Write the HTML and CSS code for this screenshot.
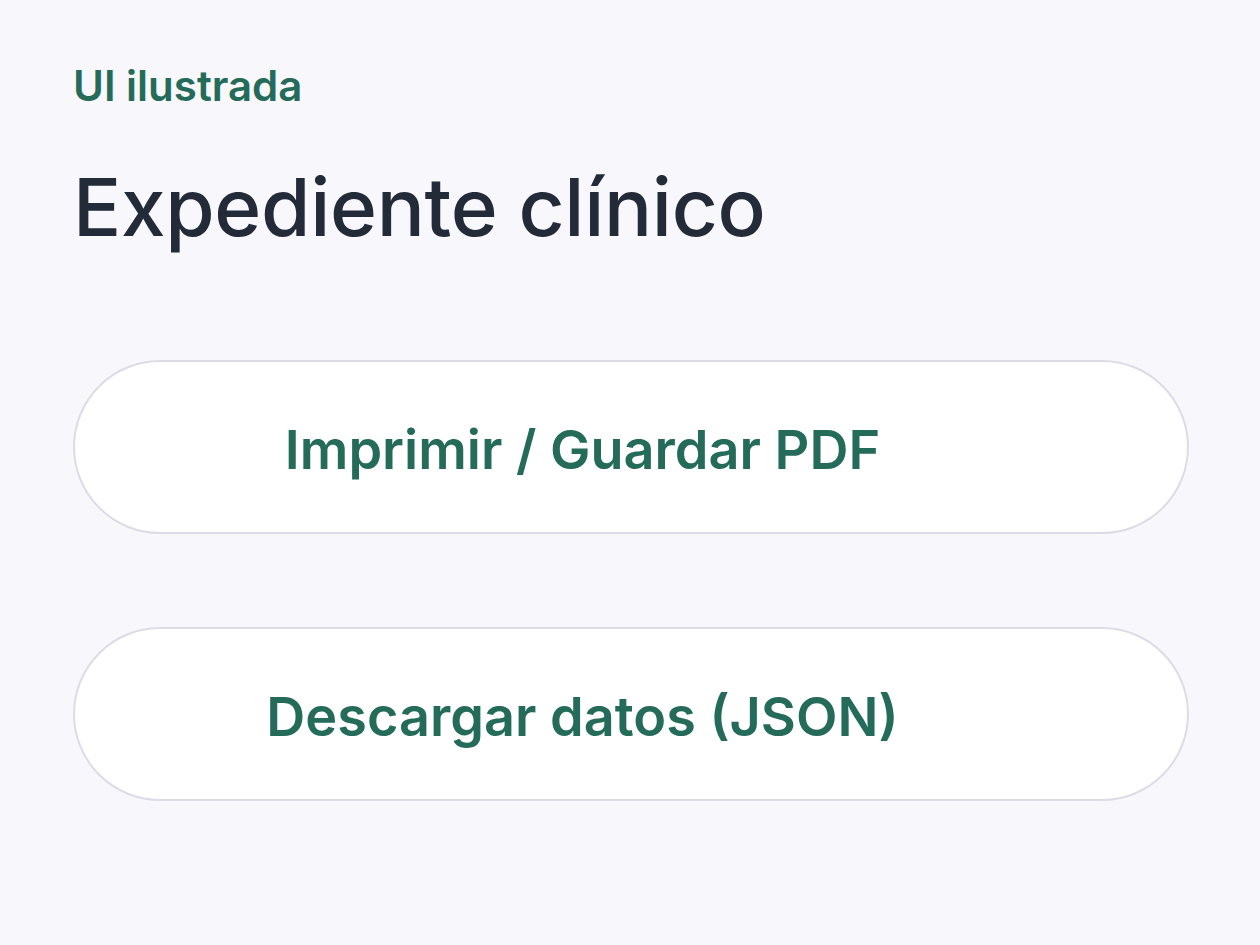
FILE: index.html
```html
<!DOCTYPE html>
<html lang="es">
<head>
<meta charset="utf-8">
<link rel="stylesheet" href="styles.css">
</head>
<body>
<main class="page">
  <p class="eyebrow">UI ilustrada</p>
  <h1 class="title">Expediente clínico</h1>
  <div class="actions">
    <button class="btn">Imprimir / Guardar PDF</button>
    <button class="btn">Descargar datos (JSON)</button>
  </div>
</main>
</body>
</html>
```
FILE: styles.css
```css
html, body {
  margin: 0;
  padding: 0;
  background: #f7f7fc;
}
.page {
  padding: 61px 72px 0 73px;
  font-family: Inter, "Noto Sans", sans-serif;
}
.eyebrow {
  margin: 0;
  font-size: 42px;
  font-weight: 600;
  color: #256b5a;
  line-height: 50px;
}
.title {
  margin: 48px 0 0 0;
  font-size: 80px;
  font-weight: 500;
  color: #232a38;
  letter-spacing: -0.3px;
  line-height: 96px;
}
.actions {
  margin-top: 105px;
  display: flex;
  flex-direction: column;
  gap: 93px;
}
.btn {
  height: 174px;
  width: 1116px;
  border: 2px solid #dcdce6;
  border-radius: 87px;
  background: #ffffff;
  color: #256b5a;
  font-family: Inter, "Noto Sans", sans-serif;
  font-size: 54px;
  font-weight: 600;
  padding: 4px 97px 0 0;
  text-align: center;
}
```
